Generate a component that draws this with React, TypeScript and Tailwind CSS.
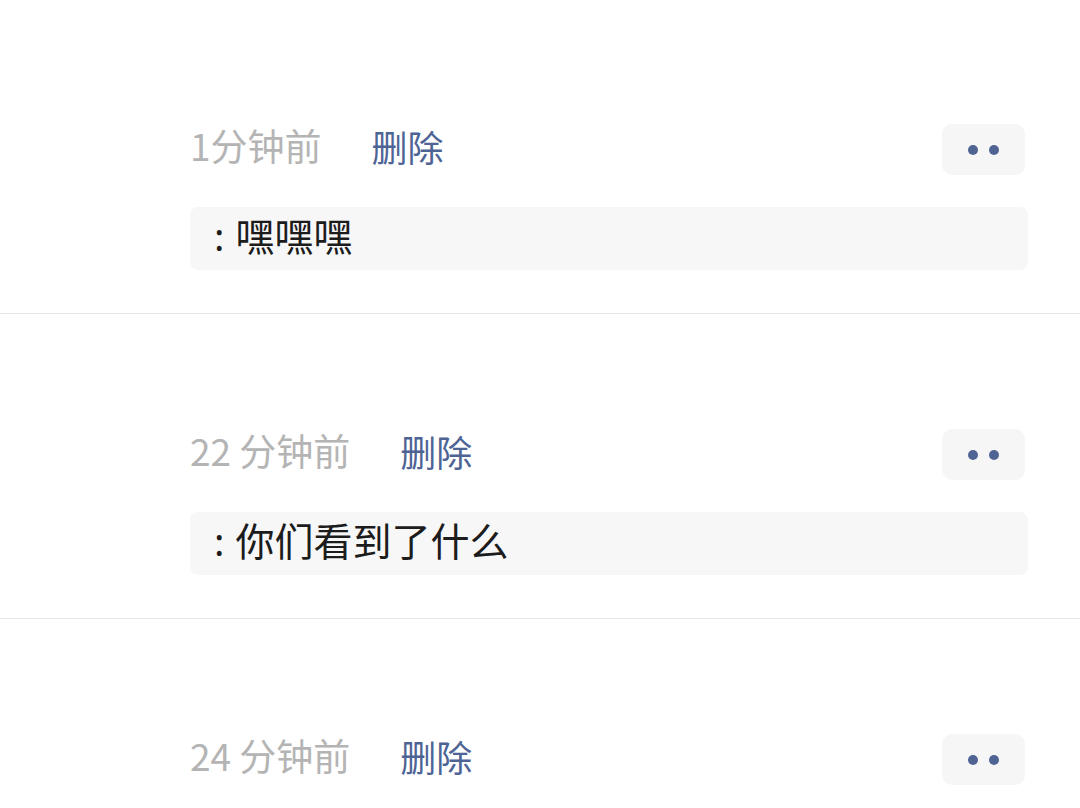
import React from "react";

const items = [
  { time: "1分钟前", text: "嘿嘿嘿" },
  { time: "22 分钟前", text: "你们看到了什么" },
  { time: "24 分钟前", text: "" },
];

export default function App() {
  return (
    <div
      className="w-[1080px] h-[808px] overflow-hidden bg-white pt-[9px]"
      style={{ fontFamily: '"Noto Sans CJK SC", "Noto Sans", sans-serif' }}
    >
      {items.map((it, i) => (
        <div key={i} className="border-b border-[#e6e6e6] pt-[115px] pb-[43px]">
          <div className="pl-[190px] pr-[55px] flex items-center h-[51px]">
            <span className="text-[37px] leading-none pb-[8px] text-[#b4b4b4]">{it.time}</span>
            <span className="ml-[50px] text-[36px] leading-none pb-[8px] text-[#4e6495]">删除</span>
            <button className="ml-auto w-[83px] h-[51px] rounded-[10px] bg-[#f6f6f7] flex items-center justify-center gap-[11px]">
              <span className="w-[10px] h-[10px] rounded-full bg-[#4f6493]" />
              <span className="w-[10px] h-[10px] rounded-full bg-[#4f6493]" />
            </button>
          </div>
          <div className="ml-[190px] mt-[32px] w-[838px] h-[63px] rounded-[8px] bg-[#f7f7f7] flex items-center pl-[24px]">
            <span className="text-[39px] leading-none pb-[8px] text-[#1c1c1c] flex items-baseline">
              <span className="mr-[11px]" style={{ fontFamily: '"Noto Sans", sans-serif' }}>:</span>
              {it.text}
            </span>
          </div>
        </div>
      ))}
    </div>
  );
}
